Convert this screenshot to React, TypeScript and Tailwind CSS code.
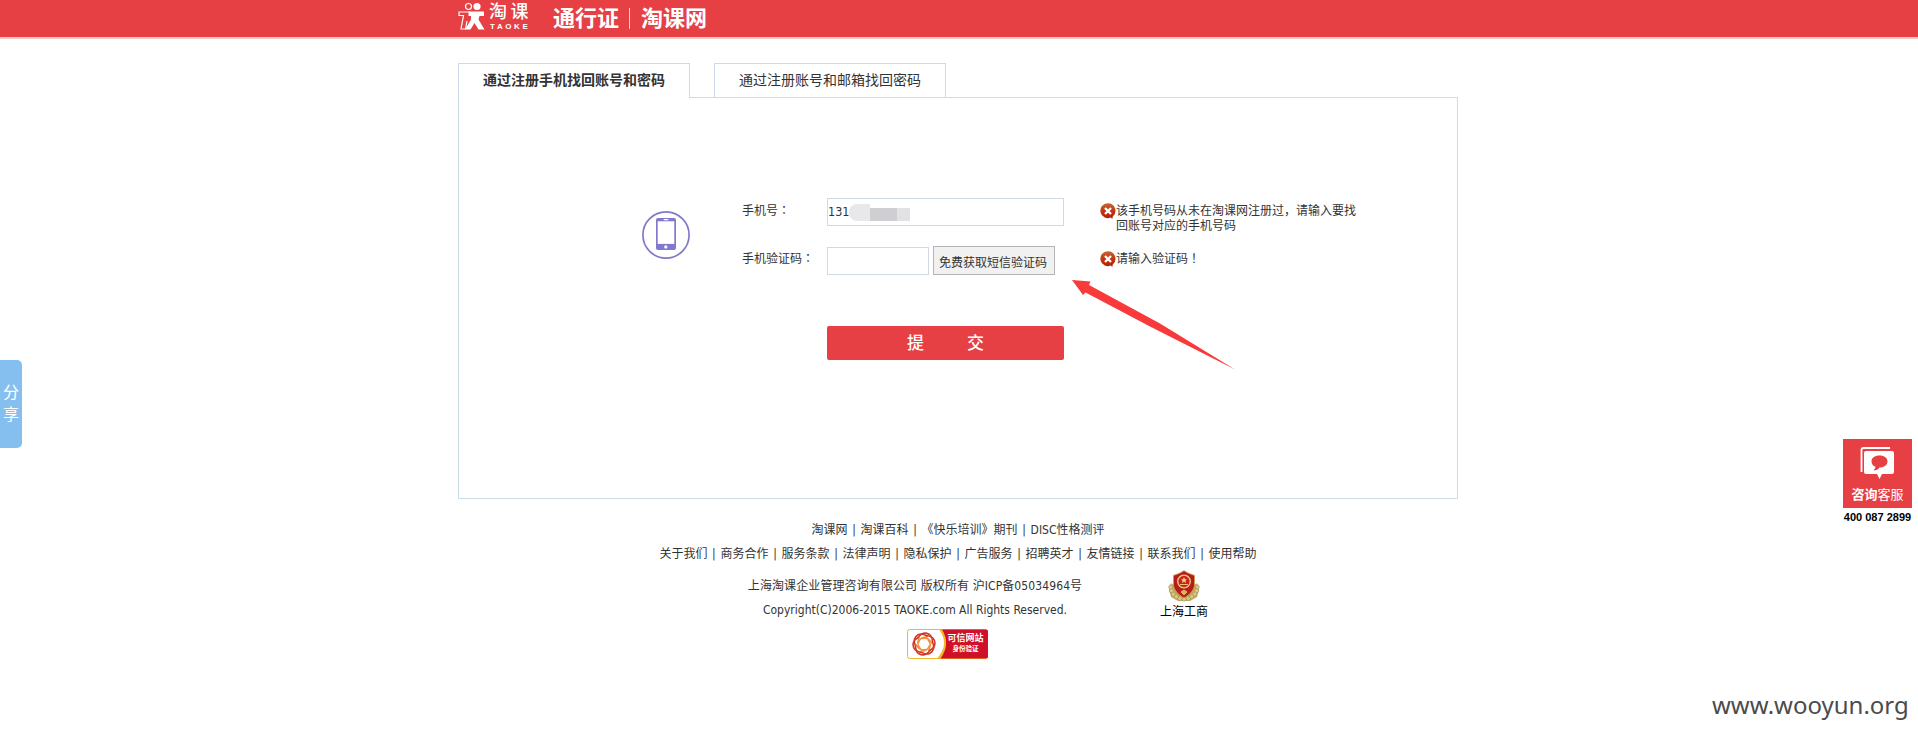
import React from 'react';

const topLinks = ['淘课网', '淘课百科', '《快乐培训》期刊', 'DISC性格测评'];
const siteLinks = ['关于我们', '商务合作', '服务条款', '法律声明', '隐私保护', '广告服务', '招聘英才', '友情链接', '联系我们', '使用帮助'];

function Logo() {
  return (
    <svg className="h-[31px] w-[28px]" viewBox="0 0 28 31" fill="none">
      <circle cx="11.5" cy="6.5" r="3" stroke="#fff" strokeWidth="1.2" />
      <circle cx="20" cy="6.5" r="3.6" fill="#fff" />
      <path d="M13 12H2V15.5H6.5L4 29H8.5L10 21" stroke="#fff" strokeWidth="1.2" />
      <path d="M11.5 11.5H27V16H22.5L21.5 19.5L27.5 29.5H21.5L17.5 23L13.5 29.5H8L14 19.5V16H11.5Z" fill="#fff" />
    </svg>
  );
}

function PhoneIcon() {
  return (
    <svg className="h-[48px] w-[48px]" viewBox="0 0 48 48">
      <circle cx="24" cy="24" r="23.1" fill="none" stroke="#8179c9" strokeWidth="1.7" />
      <rect x="14" y="7" width="20" height="32" rx="2" fill="#8179cf" />
      <rect x="15.7" y="10.3" width="16.6" height="22.6" fill="#fff" />
      <rect x="21.5" y="8" width="5" height="1.2" rx="0.6" fill="#fff" />
      <rect x="22.3" y="34.5" width="3" height="3" rx="1" fill="#fff" />
    </svg>
  );
}

function ErrorIcon() {
  return (
    <svg className="h-4 w-4 shrink-0" viewBox="0 0 16 16">
      <defs>
        <linearGradient id="err" x1="0" y1="0" x2="0" y2="1">
          <stop offset="0" stopColor="#c9643a" />
          <stop offset="0.45" stopColor="#c23a10" />
          <stop offset="1" stopColor="#b01f05" />
        </linearGradient>
      </defs>
      <path d="M7.7 0.2A7.5 7.5 0 1 0 10.8 14.6L12.3 15.9L12.8 13.4A7.5 7.5 0 0 0 7.7 0.2Z" fill="url(#err)" />
      <path d="M5 5L11 11M11 5L5 11" stroke="#fff" strokeWidth="2.3" />
    </svg>
  );
}

function Emblem() {
  const beads = Array.from({ length: 11 }, (_, i) => i);
  return (
    <svg className="h-[32px] w-[32px]" viewBox="0 0 32 32">
      <path d="M3 13L1 20L3 27L10 31H22L29 27L31 20L29 13L22 19H10Z" fill="#c3ac5f" />
      {beads.map((i) => {
        const a = (Math.PI * i) / 10;
        return <circle key={i} cx={16 + 13.2 * Math.cos(a)} cy={17 + 12 * Math.sin(a)} r="2.1" fill="#d9c989" stroke="#a5914f" strokeWidth="0.6" />;
      })}
      <path d="M16 0.7L20 3L26.5 5.5V16Q25 23 16 28Q7 23 5.5 16V5.5L12 3Z" fill="#b51d1b" stroke="#cf9b47" strokeWidth="0.9" />
      <circle cx="16" cy="11.5" r="6.3" fill="#c8231d" stroke="#ecd08a" strokeWidth="1.3" />
      <path d="M16 7L17 9.3H19L17.5 10.8L18 13L16 11.8L14 13L14.5 10.8L13 9.3H15Z" fill="#f0cf77" />
      <path d="M12 14.5H20M13 22L16 20L19 22L16 25Z" stroke="#e5bd6e" strokeWidth="1" fill="#dcae58" />
    </svg>
  );
}

function TrustBadge() {
  const petals = [0, 60, 120, 180, 240, 300];
  return (
    <div className="relative h-[30px] w-[81px]">
      <svg className="h-[30px] w-[81px]" viewBox="0 0 81 30">
        <rect x="0.5" y="0.5" width="80" height="29" rx="2" fill="#fff" stroke="#edb62d" />
        <path d="M32 0.5H79Q81 0.5 81 2.5V27.5Q81 29.5 79 29.5H30Q43 15 32 0.5Z" fill="#f6b723" />
        <path d="M35 0.5H79Q81 0.5 81 2.5V27.5Q81 29.5 79 29.5H33.5Q44 15 35 0.5Z" fill="#cf1127" />
        <g transform="translate(17 15)" fill="none" strokeLinecap="round">
          {petals.map((r) => (
            <g key={r} transform={`rotate(${r})`}>
              <path d="M-6 -6.5Q-1 -13 5 -9.8Q9 -7 8.3 -1.5" stroke="#d6392b" strokeWidth="1.6" />
              <path d="M-5.5 -1.500Q-3.500 -7.500 3 -7" stroke="#ee9034" strokeWidth="1.4" />
            </g>
          ))}
        </g>
      </svg>
      <div className="absolute left-[40px] top-[3px] flex w-[37px] flex-col items-center font-bold text-white">
        <span className="whitespace-nowrap text-[9px] leading-[13px]">可信网站</span>
        <span className="whitespace-nowrap text-[6.5px] leading-[9px]">身份验证</span>
      </div>
    </div>
  );
}

function Links({ items, className }: { items: string[]; className: string }) {
  return (
    <nav className={className}>
      {items.map((t, i) => (
        <React.Fragment key={t}>
          {i > 0 && <span className="w-[13px] text-center">|</span>}
          <a>{t}</a>
        </React.Fragment>
      ))}
    </nav>
  );
}

export default function App() {
  return (
    <div className="relative h-[735px] w-[1918px] overflow-hidden bg-white font-['DejaVu_Sans_Condensed','Noto_Sans_CJK_SC',sans-serif] text-xs text-[#333]">
      <header className="flex h-[39px] border-b-2 border-[#f6c9ca] bg-[#e64044] pl-[457px] text-white">
        <Logo />
        <div className="ml-[4px] mt-[3px] flex w-[44px] flex-col">
          <span className="whitespace-nowrap text-[18px] font-medium leading-[18px] tracking-[3.5px]">淘课</span>
          <span className="mt-[2px] pl-px font-['Liberation_Sans',sans-serif] text-[8px] font-bold leading-[8px] tracking-[2.6px]">TAOKE</span>
        </div>
        <div className="ml-5 flex items-center whitespace-nowrap text-[22px] font-bold leading-[37px]">
          <span>通行证</span>
          <span className="ml-[10px] mr-[11px] h-[21px] w-px bg-[#f9cfd0]" />
          <span>淘课网</span>
        </div>
      </header>

      <main className="ml-[458px] mt-6 w-[1000px]">
        <div className="flex h-[34px] text-sm leading-[33px]">
          <div className="z-10 h-[35px] w-[232px] border border-b-0 border-[#cddae8] bg-white text-center font-bold">通过注册手机找回账号和密码</div>
          <div className="ml-6 h-[34px] w-[232px] border border-b-0 border-[#cddae8] text-center">通过注册账号和邮箱找回密码</div>
        </div>
        <section className="flex h-[402px] border border-[#cddde8]">
          <div className="ml-[183px] mt-[113px] shrink-0"><PhoneIcon /></div>
          <form className="ml-[52px] mt-[100px] w-[640px] shrink-0">
            <div className="flex h-[49px]">
              <label className="w-[85px] shrink-0 pt-[4px] leading-4">手机号<span className="font-['Noto_Sans_CJK_TC',sans-serif]">：</span></label>
              <div className="flex h-[28px] w-[237px] shrink-0 items-center border border-[#d0d9e6]">
                <span className="text-[12.5px]">131</span>
                <span className="flex h-[17px] overflow-hidden rounded-l-lg">
                  <i className="w-[21px] bg-[#e8e8ea]" />
                  <i className="mt-[4px] w-[27px] bg-[#cfced2]" />
                  <i className="mt-[4px] w-[13px] bg-[#e2e2e4]" />
                </span>
              </div>
              <div className="ml-9 mt-[5px] flex whitespace-nowrap leading-[15px]">
                <ErrorIcon />
                <span className="pt-px">该手机号码从未在淘课网注册过，请输入要找<br />回账号对应的手机号码</span>
              </div>
            </div>
            <div className="flex h-[79px]">
              <label className="w-[85px] shrink-0 pt-[3px] leading-4">手机验证码<span className="font-['Noto_Sans_CJK_TC',sans-serif]">：</span></label>
              <div className="h-[28px] w-[102px] border border-[#d0d9e6]" />
              <button type="button" className="-mt-px ml-1 h-[29px] w-[122px] whitespace-nowrap border border-[#b5b5b5] bg-[#f1f1f1] pr-[2px] pt-[4px] leading-6">免费获取短信验证码</button>
              <div className="ml-[45px] mt-[4px] flex whitespace-nowrap leading-[15px]">
                <ErrorIcon />
                <span className="-mt-px">请输入验证码<span className="font-['Noto_Sans_CJK_TC',sans-serif]">！</span></span>
              </div>
            </div>
            <button type="button" className="ml-[85px] flex h-[34px] w-[237px] items-center justify-center gap-[43px] rounded-xs bg-[#e64044] text-[17px] font-medium leading-[34px] text-white">
              <span>提</span><span>交</span>
            </button>
          </form>
        </section>
      </main>

      <footer className="flex flex-col items-center whitespace-nowrap pt-[19px] leading-6">
        <Links items={topLinks} className="-ml-0.5 flex h-6" />
        <Links items={siteLinks} className="-ml-0.5 flex h-6" />
        <div className="mt-[3px] flex h-[60px] pl-[38px]">
          <div className="w-[336px] pt-[5px] text-center">
            <p className="tracking-[0.1px]">上海淘课企业管理咨询有限公司 版权所有 沪ICP备05034964号</p>
            <p>Copyright(C)2006-2015 TAOKE.com All Rights Reserved.</p>
          </div>
          <div className="ml-[76px] mt-px flex w-[50px] flex-col items-center text-black">
            <Emblem />
            <span className="mt-[2px] leading-4">上海工商</span>
          </div>
        </div>
        <div className="-ml-[23px]"><TrustBadge /></div>
      </footer>

      <svg className="absolute left-[1070px] top-[278px] h-[94px] w-[168px]" viewBox="0 0 168 94">
        <path d="M2 2L20.5 3.5L19 7L90 45.5L165 91.5L81 49L15.5 14.5L13 17Z" fill="#f93a3a" />
      </svg>

      <aside className="absolute left-0 top-[360px] flex h-[88px] w-[22px] flex-col items-center justify-center rounded-r-[5px] bg-[#84bff0] text-base leading-[22px] text-white">
        <span>分</span><span>享</span>
      </aside>

      <aside className="absolute left-[1843px] top-[439px] w-[69px] text-center">
        <div className="flex h-[69px] flex-col items-center bg-[#e64044] text-white">
          <svg className="mt-[7px] h-[36px] w-[36px]" viewBox="0 0 36 36">
            <path d="M1.5 26V4Q1.5 2 3.5 2H30" fill="none" stroke="#fff" strokeWidth="1.8" />
            <path d="M6 5H32Q34 5 34 7V26Q34 28 32 28H22L19.5 33L17 28H6Q4 28 4 26V7Q4 5 6 5Z" fill="#fff" />
            <path d="M19.5 9.5C24.5 9.5 27.5 12 27.5 15.5C27.5 19 24 21.5 19.5 21.5C18 24 15.5 24.5 13.5 24Q15.5 22.5 15.5 20.8C13 20 11.5 18 11.5 15.5C11.5 12 14.5 9.5 19.5 9.5Z" fill="#e64044" />
          </svg>
          <p className="mt-[4px] text-[13px] leading-[18px]"><b>咨询</b>客服</p>
        </div>
        <p className="whitespace-nowrap font-['Liberation_Sans',sans-serif] text-[11px] font-bold leading-[18px] text-black">400 087 2899</p>
      </aside>

      <div className="absolute left-[1712px] top-[687px] whitespace-nowrap font-['Noto_Sans',sans-serif] text-2xl leading-9 text-[#4b4b4b]">www.wooyun.org</div>
    </div>
  );
}
